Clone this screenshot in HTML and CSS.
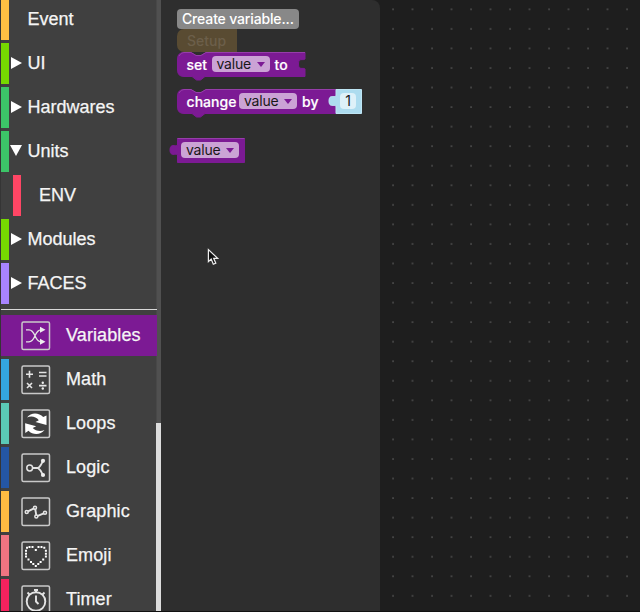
FILE: index.html
```html
<!DOCTYPE html>
<html lang="en">
<head>
<meta charset="utf-8">
<title>Blocks editor</title>
<link rel="stylesheet" href="styles.css">
</head>
<body>
<div class="editor">
  <nav class="toolbox">
    <div class="row event"><span class="arrow"></span><span>Event</span></div>
    <div class="row lime"><span class="arrow right"></span><span>UI</span></div>
    <div class="row green"><span class="arrow right"></span><span>Hardwares</span></div>
    <div class="row green"><span class="arrow down"></span><span>Units</span></div>
    <div class="row child env"><span class="arrow"></span><span>ENV</span></div>
    <div class="row lime"><span class="arrow right"></span><span>Modules</span></div>
    <div class="row violet"><span class="arrow right"></span><span>FACES</span></div>
    <div class="separator"></div>
    <div class="row tool selected"><svg class="icon" viewBox="0 0 30 30"><rect class="frame" x="1" y="1" width="27.500" height="27.500" rx="1.500"/><path d="M5 8.800h3c7 0 5 12 12 12h2M5 20.800h3c7 0 5-12 12-12h2"/><path class="solid" d="M19 5.800l5.500 3-5.500 3zM19 17.800l5.500 3-5.500 3z"/></svg><span>Variables</span></div>
    <div class="row tool math"><svg class="icon" viewBox="0 0 30 30"><rect class="frame" x="1" y="1" width="27.500" height="27.500" rx="1.500"/><path class="thick" d="M5 9.200h7M8.500 5.700v7M18 7.500h7.500M18 11h7.500M6 18l5 5M11 18l-5 5M18 20.600h7.500"/><circle class="solid" cx="21.800" cy="17.700" r="1.200"/><circle class="solid" cx="21.800" cy="23.500" r="1.200"/></svg><span>Math</span></div>
    <div class="row tool loops"><svg class="icon" viewBox="0 0 30 30"><rect class="frame" x="1" y="1" width="27.500" height="27.500" rx="1.500"/><path class="white" d="M6 8.500C10 3 18 3.500 22.200 8L25.500 6.500v9.500L14.500 13l3.300-1.800C15 7.500 10 6.500 6 8.500zM23.500 21C19.500 26.500 11.500 26 7.500 21.800L4.300 24l-.2-9.800L15.200 17.200l-3.500 1.800C14.500 22 19.500 23 23.500 21z"/></svg><span>Loops</span></div>
    <div class="row tool logic"><svg class="icon" viewBox="0 0 30 30"><rect class="frame" x="1" y="1" width="27.500" height="27.500" rx="1.500"/><circle class="ring" cx="8.700" cy="15" r="2.900"/><path class="bold" d="M11.700 15h5.300Q20 13 22 7.500M17 15Q20 17 22 22"/><circle class="solid" cx="22" cy="7.800" r="2.100"/><circle class="solid" cx="22" cy="22" r="2.100"/></svg><span>Logic</span></div>
    <div class="row tool graphic"><svg class="icon" viewBox="0 0 30 30"><rect class="frame" x="1" y="1" width="27.500" height="27.500" rx="1.500"/><path class="bold" d="M6 14.800l8-4 1.500 8.500 8.500-3.500"/><circle class="ring" cx="5.700" cy="14.900" r="1.500"/><circle class="ring" cx="14" cy="10.800" r="1.500"/><circle class="ring" cx="15.300" cy="19.500" r="1.500"/><circle class="ring" cx="24" cy="15.700" r="1.500"/></svg><span>Graphic</span></div>
    <div class="row tool emoji"><svg class="icon" viewBox="0 0 30 30"><rect class="frame" x="1" y="1" width="27.500" height="27.500" rx="1.500"/><path class="pixels" d="M7.500 6h2M10.500 6h2M16.500 6h2M19.500 6h2M22.300 6.800h2M5 6.800h2M13.800 9h2M4 9.800h2M4 12.700h2M4 15.600h2M23.900 9.800h2M23.900 12.700h2M23.900 15.600h2M6.500 18.400h2M21.200 18.400h2M9 20.900h2M18.600 20.900h2M11.300 23h2M16.300 23h2M13.800 25h2"/></svg><span>Emoji</span></div>
    <div class="row tool timer"><svg class="icon" viewBox="0 0 30 30"><rect class="frame" x="1" y="1" width="27.500" height="34" rx="1.500"/><circle class="bold" cx="15" cy="16.500" r="9.300"/><path class="bold" d="M15 10.500v6l2.500 2.500M15 4.500v2.500M13 5h4M6.500 7.500l2 2M23.500 7.500l-2 2"/></svg><span>Timer</span></div>
    <div class="scroll-thumb"></div>
  </nav>
  <main class="workspace">
    <svg class="grid-dots" width="479" height="612">
      <defs><pattern id="dots" x="222.200" y="-0.500" width="19.500" height="19.550" patternUnits="userSpaceOnUse"><rect x="9" y="9.200" width="1.700" height="1.300" fill="#595959"/></pattern></defs>
      <rect width="479" height="612" fill="url(#dots)"/>
    </svg>
    <section class="flyout">
      <div class="create">Create variable...</div>
      <div class="setup">Setup</div>
      <div class="block set">
        <svg class="shape" width="132" height="30"><path d="M7 .5h7l5 3h5l5-3h99v6.500c-2 2-6.500-2-6.500 5s4.500 3 6.500 5V24.500H28l-4.500 3.500h-4L15 24.500H7Q.5 24.500 .5 18V7Q.5 .5 7 .5z"/><path class="edge" d="M2 4Q4 .5 7 .5h7l5 3h5l5-3h99"/></svg>
        <span class="label w-set">set</span><span class="field">value<i></i></span><span class="label">to</span>
      </div>
      <div class="block change">
        <svg class="shape" width="188" height="30"><path d="M7 .5h7l5 3h5l5-3h130V24.500H28l-4.500 3.500h-4L15 24.500H7Q.5 24.500 .5 18V7Q.5 .5 7 .5z"/><path class="edge" d="M2 4Q4 .5 7 .5h7l5 3h5l5-3h130"/><path class="blue" d="M159 .5h25.500V24.500H159v-7.500c-2-2-7 2-7-5s5-3 7-5z"/></svg>
        <span class="label w-change">change</span><span class="field">value<i></i></span><span class="label w-by">by</span><span class="number">1</span>
      </div>
      <div class="block getter">
        <svg class="shape" width="78" height="28"><path d="M8.500 .5H75.500V24.500H8.500v-7.500c-2-2-7.500 2-7.500-5s5.500-3 7.500-5z"/><path class="edge" d="M8.500 .5H75.500"/></svg>
        <span class="field">value<i></i></span>
      </div>
    </section>
  </main>
  <svg class="cursor" width="13" height="19" viewBox="0 0 14 20"><path d="M1.500 1.500v13l3-2.800 2.300 5.600 2.700-1.200-2.300-5.200h4.300z"/></svg>
</div>
</body>
</html>
```

FILE: styles.css
```css
* { box-sizing: border-box; }
body { margin: 0; background: #1e1e1e; color: #f5f5f5; font-family: "Liberation Sans", Arial, sans-serif; }
.editor { position: relative; display: flex; width: 640px; height: 612px; overflow: hidden; border-bottom: 1px solid #111; }
.toolbox { position: relative; width: 161px; flex: none; padding: 0 4.500px 0 1px; background: #404040; box-shadow: inset 1px 0 #353535, inset -4.500px 0 #505050; overflow: hidden; }
.row { display: flex; align-items: center; height: 41px; margin-bottom: 3px; border-left: 8px solid; font-size: 18px; white-space: nowrap; -webkit-text-stroke: .25px #f5f5f5; }
.row:first-child { margin-top: -1px; }
.row > span:last-child { color: #f5f5f5; }
.arrow { width: 18.500px; flex: none; display: flex; padding: 0 0 1.500px 2px; }
.right::before { content: ""; border-left: 11.500px solid #fff; border-top: 6.500px solid transparent; border-bottom: 6.500px solid transparent; }
.down { padding-left: 1px; }
.down::before { content: ""; border-top: 11px solid #fff; border-left: 6.500px solid transparent; border-right: 6.500px solid transparent; }
.event { border-color: #ffc043; }
.lime { border-color: #76d900; }
.green { border-color: #3cc568; }
.env { border-color: #ff4665; margin-left: 12px; }
.env .arrow { width: 18px; }
.violet { border-color: #a884ff; }
.separator { height: 1px; margin: 5px 0 5px; background: #d8d8d8; }
.tool { padding-left: 12px; gap: 15px; }
.tool > span { letter-spacing: .1px; }
.selected { border-color: #7c1a94; background: #7c1a94; }
.math { border-color: #34a6df; }
.loops { border-color: #5bc9b6; }
.logic { border-color: #2456a4; }
.graphic { border-color: #ffbb42; }
.emoji { border-color: #ee7481; }
.timer { border-color: #f3225e; }
.icon { width: 30px; height: 30px; flex: none; overflow: visible; fill: none; stroke: #e4e4e4; stroke-width: 1.300; }
.icon .frame { stroke: #c9c9c9; stroke-width: 1.500; }
.icon .solid { fill: #eee; stroke: none; }
.icon .white { fill: #fff; stroke: none; }
.icon .thick { stroke-width: 1.600; }
.icon .bold { stroke-width: 1.900; }
.icon .ring { fill: #404040; stroke-width: 1.500; }
.icon .pixels { stroke: #fff; stroke-width: 2; }
.scroll-thumb { position: absolute; right: 0; top: 423px; width: 5px; height: 189px; background: #dcdcdc; }
.workspace { position: relative; flex: 1; background: #1e1e1e; }
.grid-dots { position: absolute; left: 0; top: 0; }
.flyout { position: relative; display: flex; flex-direction: column; align-items: flex-start; width: 219px; height: 612px; padding: 9px 0 0 16px; background: #2e2e2e; border-radius: 0 8px 0 0; font-family: Inter, sans-serif; font-size: 14px; }
.create { width: 122px; height: 20px; border-radius: 4px; background: #888; color: #fff; line-height: 19px; padding-left: 5px; white-space: nowrap; font-weight: 500; letter-spacing: -.15px; }
.setup { width: 60px; height: 23px; border-radius: 7px 0 0 7px; background: #594b32; color: #6c5f4a; padding-left: 10px; line-height: 23px; font-weight: 500; }
.block { position: relative; display: flex; align-items: center; height: 25px; padding: 0 0 1px 9.500px; }
.set { width: 132px; }
.change { width: 188px; margin-top: 12px; }
.getter { width: 78px; margin: 24px 0 0 -8px; padding-left: 12px; }
.shape { position: absolute; left: 0; top: 0; overflow: visible; fill: #7c1a94; stroke: #7c1a94; stroke-width: 1; }
.shape .edge { fill: none; stroke: #963daa; }
.shape .blue { fill: #addcef; stroke: #bee5f4; }
.label { position: relative; color: #fff; font-weight: 500; letter-spacing: .05px; -webkit-text-stroke: .2px #fff; }
.w-set { width: 25px; }
.w-change { width: 52.500px; }
.w-by { width: 38px; }
.field { position: relative; display: flex; align-items: center; justify-content: space-between; width: 58px; height: 16px; margin-right: 5px; padding: 0 5px; border-radius: 4px; background: #cba3d5; color: #181818; line-height: 16px; letter-spacing: -.2px; }
.field i { margin-top: 1px; border-top: 5px solid #7c1a94; border-left: 4px solid transparent; border-right: 4px solid transparent; }
.number { position: relative; width: 16px; height: 16px; border-radius: 4px; background: #def1f9; color: #181818; text-align: center; line-height: 16px; }
.cursor { position: absolute; left: 207px; top: 248px; fill: #111; stroke: #eee; stroke-width: 1.300; }
```
